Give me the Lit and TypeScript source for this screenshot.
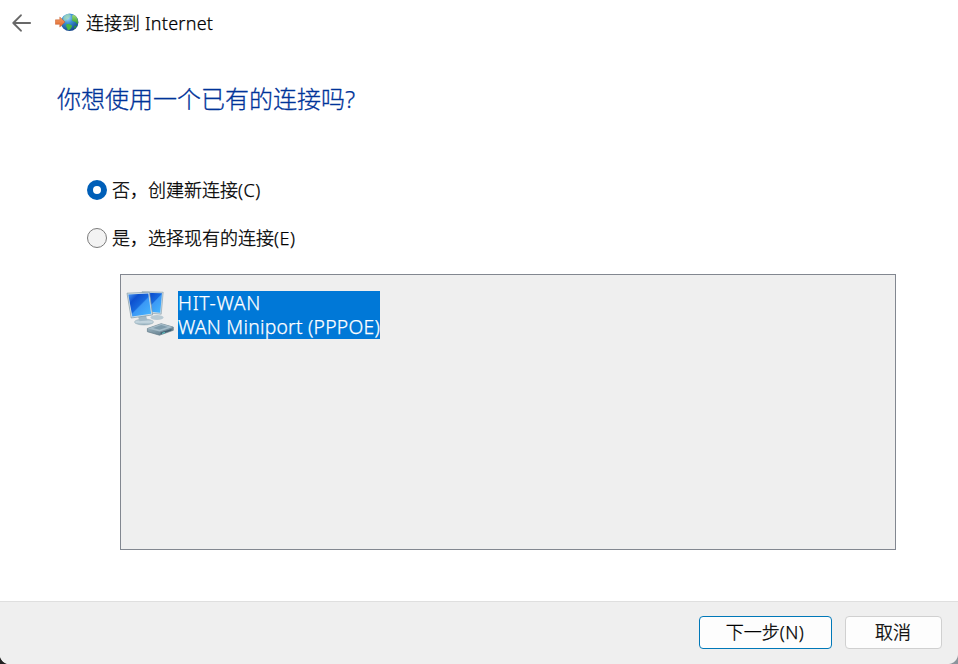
import { LitElement, html, css, svg } from "lit";
import { customElement, state } from "lit/decorators.js";

const backIcon = svg`
  <svg class="back" width="20" height="18" viewBox="0 0 20 18" fill="none" stroke="#686868" stroke-width="1.9" stroke-linecap="round" stroke-linejoin="round">
    <path d="M8.9 1.3 1.3 9l7.6 7.7M1.7 9h16.4"/>
  </svg>`;

const globeIcon = svg`
  <svg class="globe" width="25" height="22" viewBox="0 0 25 22">
    <defs>
      <radialGradient id="sea" cx=".38" cy=".25" r=".8">
        <stop offset="0" stop-color="#b5e2f8"/><stop offset=".38" stop-color="#3c91d4"/><stop offset="1" stop-color="#123f86"/>
      </radialGradient>
      <linearGradient id="land" x2="0" y2="1"><stop stop-color="#a3db71"/><stop offset="1" stop-color="#269a2c"/></linearGradient>
      <linearGradient id="arrow" x2="0" y2="1"><stop stop-color="#f5a06a"/><stop offset="1" stop-color="#de6428"/></linearGradient>
    </defs>
    <circle cx="14.6" cy="10.3" r="8.8" fill="url(#sea)"/>
    <path d="M8.2 6.2c.7-2 2.6-3.8 5.4-4.4 1.3.4 1.4 1.5 2.6 1.8-.7 1.7-2.3 1.5-3 3-1.2.3-1.5 1.9-2.8 2.2-1 .5-1.8-.4-2.2-2.6Z" fill="#9bd5b2" opacity=".7"/>
    <path d="M17.4 3.1c2-.2 3.5.9 4.6 2.8 1 1.8 1.3 3.9.6 6.2-1 .4-1.2-1.6-2.2-2-1.2-.8-3-.5-3.5-2.1.9-1.2-.1-2.5.5-4.9Z" fill="url(#land)"/>
    <path d="M11.6 12.2c1.7-.8 3.4.1 4.6.9 1.2.3 1 1.7.2 2.4-.9 1.2-1.4 2.4-3 2.7-1.4-.2-1-2-1.8-2.9-.6-1-.8-2.1 0-3.1Z" fill="#48b743"/>
    <path d="M19.2 14.2c1-.5 2-.4 2.6-.1-.6 1.2-1.4 2.1-2.4 2.8Z" fill="#2f963a"/>
    <path d="M.4 7.8h4.4V5l5.2 5-5.2 5v-2.7H.4Z" fill="url(#arrow)" stroke="#c65b2a" stroke-width=".5" stroke-linejoin="round"/>
  </svg>`;

const networkIcon = svg`
  <svg class="network" width="48" height="47" viewBox="0 0 48 47">
    <defs>
      <linearGradient id="screen" x1="0" y1="0" x2="1" y2="1">
        <stop offset="0" stop-color="#4b9af4"/><stop offset=".25" stop-color="#0d50cf"/><stop offset=".5" stop-color="#1769de"/><stop offset=".54" stop-color="#3b98f5"/><stop offset="1" stop-color="#45b7ff"/>
      </linearGradient>
      <linearGradient id="metal" x2="0" y2="1"><stop stop-color="#9fb6c3"/><stop offset=".5" stop-color="#c9dae3"/><stop offset="1" stop-color="#8fabb9"/></linearGradient>
      <linearGradient id="box" x2="1" y2="1"><stop stop-color="#a9c0cc"/><stop offset="1" stop-color="#526f7f"/></linearGradient>
    </defs>
    <ellipse cx="31" cy="28.5" rx="6.5" ry="2.6" fill="#b9cad3"/>
    <path d="m16 2.7 21.2.5-2 22-17-1.6Z" fill="#c8dae4" stroke="#839ba7" stroke-width=".6"/>
    <path d="m17 3.8 19 .4-1.8 19.5-15.5-1.6Z" fill="url(#screen)"/>
    <ellipse cx="18" cy="33" rx="9.5" ry="3" fill="url(#metal)" stroke="#8fa6b2" stroke-width=".5"/>
    <path d="m12 27.5 8-1.4 1.2 5.2-7.6.9Z" fill="#a2b9c6"/>
    <path d="m1 4.2 22.4-1 3.2 22.7L5.2 29Z" fill="#cfe0e9" stroke="#8299a5" stroke-width=".7"/>
    <path d="m2.3 5.4 20-.9 2.8 20.2-18.8 2.7Z" fill="url(#screen)"/>
    <path d="m21.4 39.5 13.8-4.8 12.1 3.4v3.2l-13.8 4.9-12.1-3.5Z" fill="url(#box)" stroke="#637b88" stroke-width=".7" stroke-linejoin="round"/>
    <path d="m21.7 39.4 13.5-4.6 11.8 3.3-13.5 4.5Z" fill="#a5bcc9"/>
    <path d="m27 39 8.3-2.9 6.5 1.9-8.3 2.8Z" fill="#7f9cac"/>
    <path d="m34.5 43.6 11-3.7v1.6l-11 3.8Z" fill="#425f70"/>
    <path d="m36 43.9 2.8-.9v.9l-2.8.9Z" fill="#5ee0d8"/>
  </svg>`;

@customElement("app-root")
export class AppRoot extends LitElement {
  @state() private choice = "new";

  static styles = css`
    :host {
      display: flex;
      flex-direction: column;
      box-sizing: border-box;
      height: 100vh;
      overflow: hidden;
      position: relative;
      background: #fff;
      color: #000;
      font: 350 18px/24px "Noto Sans", "Noto Sans CJK SC", sans-serif;
      letter-spacing: 0.25px;
      -webkit-text-stroke: 0.25px currentColor;
      white-space: nowrap;
    }
    svg { display: block; flex: none; }
    .zh { font-family: "Noto Sans CJK SC", sans-serif; font-weight: 300; letter-spacing: 0; -webkit-text-stroke-width: 0.3px; }
    header { display: flex; align-items: center; height: 46px; padding-left: 12px; box-sizing: border-box; }
    header > span { margin-top: -2px; }
    .globe { margin: 0 6px 0 23px; }
    main { flex: 1; }
    h1 { margin: 36px 0 0 57px; font-size: 24px; line-height: 32px; font-weight: 350; color: #003399; }
    .choices { display: flex; flex-direction: column; gap: 24px; margin: 63px 0 0 87px; }
    .choice { display: flex; align-items: center; gap: 5px; height: 24px; }
    .label { margin-top: -2px; }
    .key { letter-spacing: 0.5px; }
    .radio { box-sizing: border-box; width: 20px; height: 20px; border: 1px solid #7b7b7b; border-radius: 50%; background: #f3f3f3; }
    .radio.on { border: 6px solid #005fb8; background: #fff; }
    .connections { box-sizing: border-box; width: 776px; height: 276px; margin: 24px 0 0 120px; padding: 14px 5px; border: 1px solid #828790; background: #efefef; }
    .connection { display: flex; align-items: flex-start; gap: 4px; }
    .details { margin-top: 2px; width: 202px; background: #0078d7; color: #fff; font-size: 19.3px; line-height: 24px; }
    .details div { height: 24px; }
    .name { letter-spacing: 0.7px; }
    footer { display: flex; justify-content: flex-end; gap: 13px; box-sizing: border-box; height: 63px; padding: 14px 16px; border-top: 1px solid #dfdfdf; background: #efefef; }
    button { box-sizing: border-box; height: 33px; padding: 0 1px 2px 0; border: 1px solid #d0d0d0; border-radius: 4px; background: #fdfdfd; color: #000; font: inherit; letter-spacing: inherit; }
    .next { width: 133px; border-color: #0078b8; }
    .cancel { width: 97px; }
    .corner { position: absolute; bottom: 0; width: 10px; height: 10px; }
    .left { left: 0; background: radial-gradient(circle at 100% 0, transparent 10px, #222 10.8px); }
    .right { right: 0; background: radial-gradient(circle at 0 0, transparent 9.5px, #8c949c 10.5px); }
  `;

  private radio(id: string, zh: string, key: string) {
    return html`<div class="choice" @click=${() => (this.choice = id)}>
      <span class="radio ${this.choice === id ? "on" : ""}"></span>
      <span class="label"><span class="zh">${zh}</span><span class="key">${key}</span></span>
    </div>`;
  }

  render() {
    return html`
      <header>${backIcon}${globeIcon}<span><span class="zh">连接到</span> Internet</span></header>
      <main>
        <h1><span class="zh">你想使用一个已有的连接吗</span>?</h1>
        <div class="choices">
          ${this.radio("new", "否，创建新连接", "(C)")}
          ${this.radio("existing", "是，选择现有的连接", "(E)")}
        </div>
        <div class="connections">
          <div class="connection">
            ${networkIcon}
            <div class="details"><div class="name">HIT-WAN</div><div>WAN Miniport (PPPOE)</div></div>
          </div>
        </div>
      </main>
      <footer>
        <button class="next"><span class="zh">下一步</span><span class="key">(N)</span></button>
        <button class="cancel"><span class="zh">取消</span></button>
      </footer>
      <span class="corner left"></span><span class="corner right"></span>
    `;
  }
}
